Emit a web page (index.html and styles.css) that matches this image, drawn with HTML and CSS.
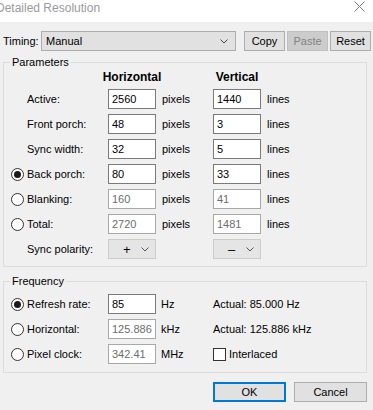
FILE: index.html
```html
<!DOCTYPE html>
<html lang="en">
<head>
    <meta charset="UTF-8">
    <meta name="viewport" content="width=device-width, initial-scale=1.0">
    <title>Detailed Resolution</title>
    <link rel="stylesheet" href="styles.css">
</head>
<body>
    <div class="titlebar">
        <span class="title">Detailed Resolution</span>
        <svg class="close" width="11" height="11" viewBox="0 0 11 11">
            <path d="M0.5 0.5 L10.5 10.5 M10.5 0.5 L0.5 10.5" stroke="#7a7a7a" stroke-width="1" fill="none"/>
        </svg>
    </div>

    <div class="dialog">
        <div class="timing-row">
            <span class="timing-label">Timing:</span>
            <div class="combo timing-combo">
                <span>Manual</span>
                <svg class="chevron" width="8" height="5" viewBox="0 0 8 5"><path d="M0.5 0.5 L4 4 L7.5 0.5" stroke="#444" fill="none"/></svg>
            </div>
            <div class="timing-buttons">
                <button class="btn small">Copy</button>
                <button class="btn small" disabled>Paste</button>
                <button class="btn small">Reset</button>
            </div>
        </div>

        <fieldset class="group">
            <legend>Parameters</legend>
            <div class="grid params">
                <span></span>
                <span class="head">Horizontal</span>
                <span></span>
                <span class="head">Vertical</span>
                <span></span>

                <span class="label">Active:</span>
                <span class="field">2560</span><span class="unit">pixels</span>
                <span class="field">1440</span><span class="unit">lines</span>

                <span class="label">Front porch:</span>
                <span class="field">48</span><span class="unit">pixels</span>
                <span class="field">3</span><span class="unit">lines</span>

                <span class="label">Sync width:</span>
                <span class="field">32</span><span class="unit">pixels</span>
                <span class="field">5</span><span class="unit">lines</span>

                <span class="label radio-label"><span class="radio checked"></span>Back porch:</span>
                <span class="field">80</span><span class="unit">pixels</span>
                <span class="field">33</span><span class="unit">lines</span>

                <span class="label radio-label"><span class="radio"></span>Blanking:</span>
                <span class="field disabled">160</span><span class="unit">pixels</span>
                <span class="field disabled">41</span><span class="unit">lines</span>

                <span class="label radio-label"><span class="radio"></span>Total:</span>
                <span class="field disabled">2720</span><span class="unit">pixels</span>
                <span class="field disabled">1481</span><span class="unit">lines</span>

                <span class="label">Sync polarity:</span>
                <div class="combo polarity"><span class="sign">+</span><svg class="chevron" width="8" height="5" viewBox="0 0 8 5"><path d="M0.5 0.5 L4 4 L7.5 0.5" stroke="#555" fill="none"/></svg></div>
                <span></span>
                <div class="combo polarity"><span class="sign">&ndash;</span><svg class="chevron" width="8" height="5" viewBox="0 0 8 5"><path d="M0.5 0.5 L4 4 L7.5 0.5" stroke="#555" fill="none"/></svg></div>
                <span></span>
            </div>
        </fieldset>

        <fieldset class="group freq-group">
            <legend>Frequency</legend>
            <div class="grid freq">
                <span class="label radio-label"><span class="radio checked"></span>Refresh rate:</span>
                <span class="field">85</span><span class="unit">Hz</span>
                <span class="actual">Actual: 85.000 Hz</span>

                <span class="label radio-label"><span class="radio"></span>Horizontal:</span>
                <span class="field disabled">125.886</span><span class="unit">kHz</span>
                <span class="actual">Actual: 125.886 kHz</span>

                <span class="label radio-label"><span class="radio"></span>Pixel clock:</span>
                <span class="field disabled">342.41</span><span class="unit">MHz</span>
                <span class="actual check-label"><span class="checkbox"></span>Interlaced</span>
            </div>
        </fieldset>

        <div class="footer">
            <button class="btn wide default">OK</button>
            <button class="btn wide">Cancel</button>
        </div>
    </div>
</body>
</html>
```

FILE: styles.css
```css
body {
    margin: 0;
    font-family: "Liberation Sans", Arial, sans-serif;
    font-size: 11px;
    color: #000;
    background-color: #f0f0f0;
    overflow: hidden;
}
.titlebar {
    height: 22px;
    background-color: #fff;
    display: flex;
    align-items: center;
    justify-content: space-between;
    padding-right: 8px;
}
.title {
    margin-left: -4px;
    margin-top: -6px;
    font-size: 12px;
    color: #9a9a9a;
}
.close {
    margin-top: -9px;
}
.dialog {
    padding-top: 9px;
}
.timing-row {
    display: flex;
    align-items: center;
    height: 20px;
    padding-left: 3px;
}
.timing-label {
    width: 38px;
}
.combo {
    box-sizing: border-box;
    height: 20px;
    background-color: #e1e1e1;
    border: 1px solid #adadad;
    display: flex;
    align-items: center;
    justify-content: space-between;
}
.timing-combo {
    width: 195px;
    padding: 0 7px 0 4px;
}
.timing-buttons {
    display: flex;
    gap: 2px;
    margin-left: 8px;
}
.btn {
    box-sizing: border-box;
    height: 20px;
    font-family: inherit;
    font-size: 11px;
    color: #000;
    background-color: #e1e1e1;
    border: 1px solid #adadad;
    border-radius: 0;
    padding: 0;
}
.btn.small {
    width: 41px;
}
.btn:disabled {
    color: #838383;
    background-color: #cccccc;
    border-color: #bfbfbf;
}
.group {
    margin: 5px 0 0 3px;
    width: 364px;
    box-sizing: border-box;
    border: 1px solid #dcdcdc;
    padding: 1px 7px 7px 7px;
}
.group legend {
    padding: 0 2px;
    margin-left: -1px;
    line-height: 13px;
}
.freq-group {
    margin-top: 8px;
    padding-top: 6px;
    padding-bottom: 8px;
}
.grid {
    display: grid;
    row-gap: 5px;
    align-items: center;
}
.params {
    grid-template-columns: 97px 48px 57px 48px auto;
    grid-auto-rows: 20px;
    grid-template-rows: 14px;
}
.freq {
    grid-template-columns: 97px 48px 57px auto;
    grid-auto-rows: 20px;
}
.head {
    font-weight: bold;
    font-size: 12px;
    text-align: center;
    margin: 0 -12px;
    white-space: nowrap;
}
.label {
    padding-left: 16px;
    white-space: nowrap;
}
.radio-label {
    display: flex;
    align-items: center;
    padding-left: 0;
}
.radio {
    box-sizing: border-box;
    width: 13px;
    height: 13px;
    border: 1px solid #333;
    border-radius: 50%;
    background-color: #fff;
    margin-right: 3px;
    display: flex;
    align-items: center;
    justify-content: center;
}
.radio.checked::after {
    content: "";
    width: 7px;
    height: 7px;
    border-radius: 50%;
    background-color: #1a1a1a;
}
.field {
    box-sizing: border-box;
    height: 20px;
    background-color: #fff;
    border: 1px solid #7a7a7a;
    padding-left: 3px;
    line-height: 18px;
}
.field.disabled {
    color: #6d6d6d;
    border-color: #a8a8a8;
}
.unit {
    padding-left: 6px;
}
.freq .unit {
    padding-left: 5px;
}
.polarity {
    background-color: #e5e5e5;
    border-color: #cccccc;
    padding: 0 6px 0 14px;
}
.sign {
    font-size: 13px;
}
.actual {
    white-space: nowrap;
}
.check-label {
    display: flex;
    align-items: center;
}
.checkbox {
    box-sizing: border-box;
    width: 13px;
    height: 13px;
    border: 1px solid #333;
    background-color: #fff;
    margin-right: 3px;
}
.footer {
    display: flex;
    justify-content: flex-end;
    gap: 8px;
    margin-top: 9px;
    padding-right: 6px;
}
.btn.wide {
    width: 73px;
}
.btn.default {
    border: 2px solid #0078d7;
}
```
